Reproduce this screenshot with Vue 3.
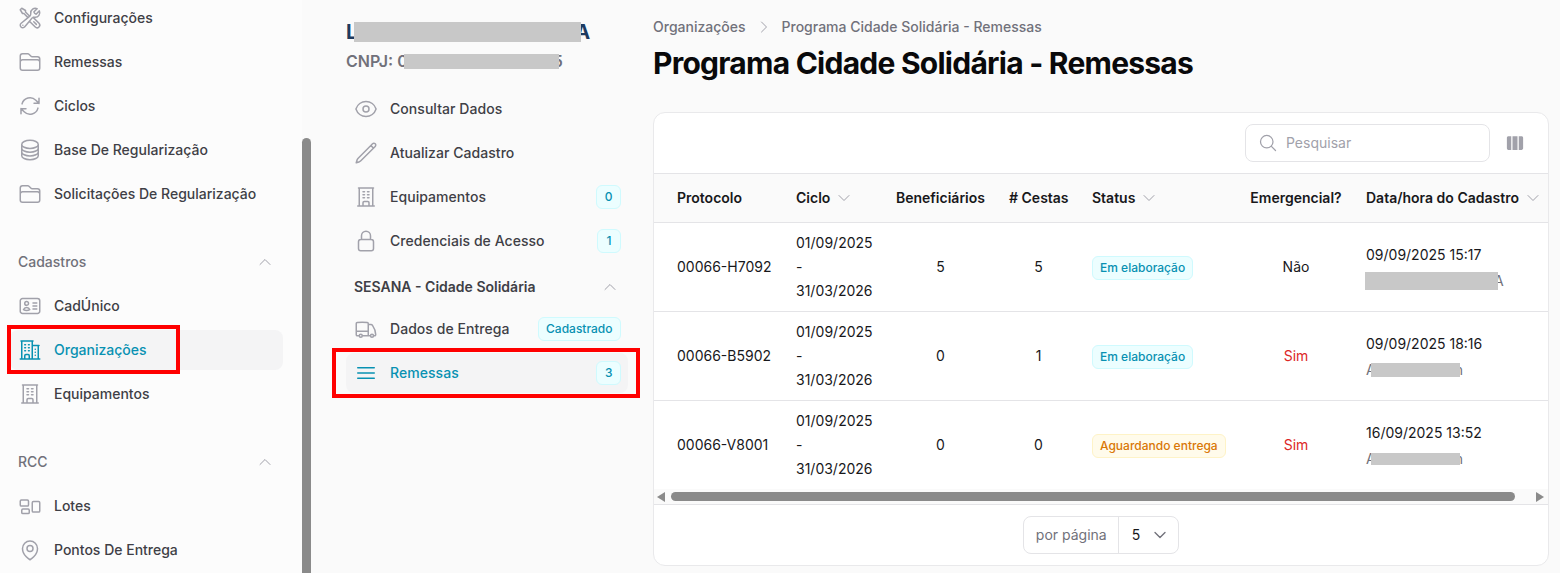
<script setup>
const P = {
  tools: 'M11.42 15.17 17.25 21A2.652 2.652 0 0 0 21 17.25l-5.877-5.877M11.42 15.17l2.496-3.03c.317-.384.74-.626 1.208-.766M11.42 15.17l-4.655 5.653a2.548 2.548 0 1 1-3.586-3.586l6.837-5.63m5.108-.233c.55-.164 1.163-.188 1.743-.14a4.5 4.5 0 0 0 4.486-6.336l-3.276 3.277a3.004 3.004 0 0 1-2.25-2.25l3.276-3.276a4.5 4.5 0 0 0-6.336 4.486c.091 1.076-.071 2.264-.904 2.95l-.102.085m-1.745 1.437L5.909 7.5H4.5L2.25 3.75l1.5-1.5L7.5 4.5v1.409l4.26 4.26m-1.745 1.437 1.745-1.437m6.615 8.206L15.75 15.75M4.867 19.125h.008v.008h-.008v-.008Z',
  folder: 'M2.25 12.75V12A2.25 2.25 0 0 1 4.5 9.75h15A2.25 2.25 0 0 1 21.75 12v.75m-8.69-6.44-2.12-2.12a1.5 1.5 0 0 0-1.061-.44H4.5A2.25 2.25 0 0 0 2.25 6v12a2.25 2.25 0 0 0 2.25 2.25h15A2.25 2.25 0 0 0 21.75 18V9a2.25 2.25 0 0 0-2.25-2.25h-5.379a1.5 1.5 0 0 1-1.06-.44Z',
  cycle: 'M16.023 9.348h4.992v-.001M2.985 19.644v-4.992m0 0h4.992m-4.993 0 3.181 3.183a8.25 8.25 0 0 0 13.803-3.7M4.031 9.865a8.25 8.25 0 0 1 13.803-3.7l3.181 3.182m0-4.991v4.99',
  stack: 'M20.25 6.375c0 2.278-3.694 4.125-8.25 4.125S3.75 8.653 3.75 6.375m16.5 0c0-2.278-3.694-4.125-8.25-4.125S3.75 4.097 3.75 6.375m16.5 0v11.25c0 2.278-3.694 4.125-8.25 4.125s-8.25-1.847-8.25-4.125V6.375m16.5 0v3.75m-16.5-3.75v3.75m16.5 0v3.75C20.25 16.153 16.556 18 12 18s-8.25-1.847-8.25-4.125v-3.75m16.5 0c0 2.278-3.694 4.125-8.25 4.125s-8.25-1.847-8.25-4.125',
  id: 'M15 9h3.75M15 12h3.75M15 15h3.75M4.5 19.5h15a2.25 2.25 0 0 0 2.25-2.25V6.75A2.25 2.25 0 0 0 19.5 4.5h-15a2.25 2.25 0 0 0-2.25 2.25v10.5A2.25 2.25 0 0 0 4.5 19.5Zm6-10.125a1.875 1.875 0 1 1-3.75 0 1.875 1.875 0 0 1 3.75 0Zm1.294 6.336a6.721 6.721 0 0 1-3.17.789 6.721 6.721 0 0 1-3.168-.789 3.376 3.376 0 0 1 6.338 0Z',
  office2: 'M2.25 21h19.5m-18-18v18m10.5-18v18m6-13.5V21M6.75 6.75h.75m-.75 3h.75m-.75 3h.75m3-6h.75m-.75 3h.75m-.75 3h.75M6.75 21v-3.375c0-.621.504-1.125 1.125-1.125h2.25c.621 0 1.125.504 1.125 1.125V21M3 3h12m-.75 4.5H21m-3.75 3.75h.008v.008h-.008v-.008Zm0 3h.008v.008h-.008v-.008Zm0 3h.008v.008h-.008v-.008Z',
  office: 'M3.75 21h16.5M4.5 3h15M5.25 3v18m13.5-18v18M9 6.75h1.5m-1.5 3h1.5m-1.5 3h1.5m3-6H15m-1.5 3H15m-1.5 3H15M9 21v-3.375c0-.621.504-1.125 1.125-1.125h3.75c.621 0 1.125.504 1.125 1.125V21',
  group: 'M2.25 7.125C2.25 6.504 2.754 6 3.375 6h6c.621 0 1.125.504 1.125 1.125v3.75c0 .621-.504 1.125-1.125 1.125h-6a1.125 1.125 0 0 1-1.125-1.125v-3.75ZM14.25 8.625c0-.621.504-1.125 1.125-1.125h5.25c.621 0 1.125.504 1.125 1.125v8.25c0 .621-.504 1.125-1.125 1.125h-5.25a1.125 1.125 0 0 1-1.125-1.125v-8.25ZM3.75 16.125c0-.621.504-1.125 1.125-1.125h5.25c.621 0 1.125.504 1.125 1.125v2.25c0 .621-.504 1.125-1.125 1.125h-5.25a1.125 1.125 0 0 1-1.125-1.125v-2.25Z',
  pin: 'M15 10.5a3 3 0 1 1-6 0 3 3 0 0 1 6 0ZM19.5 10.5c0 7.142-7.5 11.25-7.5 11.25S4.5 17.642 4.5 10.5a7.5 7.5 0 1 1 15 0Z',
  eye: 'M2.036 12.322a1.012 1.012 0 0 1 0-.639C3.423 7.51 7.36 4.5 12 4.5c4.638 0 8.573 3.007 9.963 7.178.07.207.07.431 0 .639C20.577 16.49 16.64 19.5 12 19.5c-4.638 0-8.573-3.007-9.963-7.178ZM15 12a3 3 0 1 1-6 0 3 3 0 0 1 6 0Z',
  pencil: 'm16.862 4.487 1.687-1.688a1.875 1.875 0 1 1 2.652 2.652L6.832 19.82a4.5 4.5 0 0 1-1.897 1.13l-2.685.8.8-2.685a4.5 4.5 0 0 1 1.13-1.897L16.863 4.487Zm0 0L19.5 7.125',
  lock: 'M16.5 10.5V6.75a4.5 4.5 0 1 0-9 0v3.75m-.75 11.25h10.5a2.25 2.25 0 0 0 2.25-2.25v-6.75a2.25 2.25 0 0 0-2.25-2.25H6.75a2.25 2.25 0 0 0-2.25 2.25v6.75a2.25 2.25 0 0 0 2.25 2.25Z',
  truck: 'M8.25 18.75a1.5 1.5 0 0 1-3 0m3 0a1.5 1.5 0 0 0-3 0m3 0h6m-9 0H3.375a1.125 1.125 0 0 1-1.125-1.125V14.25m17.25 4.5a1.5 1.5 0 0 1-3 0m3 0a1.5 1.5 0 0 0-3 0m3 0h1.125c.621 0 1.129-.504 1.09-1.124a17.902 17.902 0 0 0-3.213-9.193 2.056 2.056 0 0 0-1.58-.86H14.25M16.5 18.75h-2.25m0-11.177v-.958c0-.568-.422-1.048-.987-1.106a48.554 48.554 0 0 0-10.026 0 1.106 1.106 0 0 0-.987 1.106v7.635m12-6.677v6.677m0 4.5v-4.5m0 0h-12',
  bars: 'M3.75 6.75h16.5M3.75 12h16.5m-16.5 5.25h16.5',
  up: 'm4.5 15.75 7.5-7.5 7.5 7.5',
  down: 'm19.5 8.25-7.5 7.5-7.5-7.5',
  right: 'm8.25 4.5 7.5 7.5-7.5 7.5',
  search: 'm21 21-5.197-5.197m0 0A7.5 7.5 0 1 0 5.196 5.196a7.5 7.5 0 0 0 10.607 10.607Z'
}

const groups = [
  { items: [
    { i: 'tools', t: 'Configurações' }, { i: 'folder', t: 'Remessas' }, { i: 'cycle', t: 'Ciclos' },
    { i: 'stack', t: 'Base De Regularização' }, { i: 'folder', t: 'Solicitações De Regularização' }
  ] },
  { title: 'Cadastros', items: [
    { i: 'id', t: 'CadÚnico' }, { i: 'office2', t: 'Organizações', active: true }, { i: 'office', t: 'Equipamentos' }
  ] },
  { title: 'RCC', items: [
    { i: 'group', t: 'Lotes' }, { i: 'pin', t: 'Pontos De Entrega' }
  ] }
]

const sub1 = [
  { i: 'eye', t: 'Consultar Dados' }, { i: 'pencil', t: 'Atualizar Cadastro' },
  { i: 'office', t: 'Equipamentos', b: '0' }, { i: 'lock', t: 'Credenciais de Acesso', b: '1' }
]
const sub2 = [
  { i: 'truck', t: 'Dados de Entrega', b: 'Cadastrado' },
  { i: 'bars', t: 'Remessas', b: '3', active: true }
]

const heads = [
  { t: 'Protocolo' }, { t: 'Ciclo', s: 1 }, { t: 'Beneficiários', c: 1 }, { t: '# Cestas', c: 1 },
  { t: 'Status', s: 1 }, { t: 'Emergencial?', c: 1 }, { t: 'Data/hora do Cadastro', s: 1 }
]
const rows = [
  { p: '00066-H7092', b: 5, c: 5, st: 'Em elaboração', warn: false, em: 'Não', d: '09/09/2025 15:17', pre: '', w: 133, h: 18, ml: -1, mr: -4, post: 'A' },
  { p: '00066-B5902', b: 0, c: 1, st: 'Em elaboração', warn: false, em: 'Sim', d: '09/09/2025 18:16', pre: 'A', w: 89, h: 14, ml: -5, mr: -5, post: 'n' },
  { p: '00066-V8001', b: 0, c: 0, st: 'Aguardando entrega', warn: true, em: 'Sim', d: '16/09/2025 13:52', pre: 'A', w: 89, h: 12, ml: -5, mr: -5, post: 'n' }
]
const redactStyle = (r) => ({
  width: r.w + 'px',
  height: r.h + 'px',
  marginLeft: r.ml + 'px',
  marginRight: r.mr + 'px'
})
</script>

<template>
  <div class="page">
    <aside class="side">
      <section v-for="(g, gi) in groups" :key="gi" class="group">
        <div v-if="g.title" class="group-title">
          <span>{{ g.title }}</span>
          <svg class="chev" viewBox="0 0 24 24"><path :d="P.up" /></svg>
        </div>
        <a v-for="it in g.items" :key="it.t" class="row" :class="{ active: it.active }">
          <svg class="ico" viewBox="0 0 24 24"><path :d="P[it.i]" /></svg>
          <span>{{ it.t }}</span>
        </a>
      </section>
      <div class="side-track"><div class="side-thumb"></div></div>
    </aside>

    <nav class="sub">
      <h2 class="org">L<span class="redact org-r"></span>A</h2>
      <p class="cnpj">CNPJ: 0<span class="redact cnpj-r"></span>5</p>
      <a v-for="it in sub1" :key="it.t" class="srow">
        <svg class="ico" viewBox="0 0 24 24"><path :d="P[it.i]" /></svg>
        <span class="slabel">{{ it.t }}</span>
        <span v-if="it.b" class="badge">{{ it.b }}</span>
      </a>
      <div class="sub-title">
        <span>SESANA - Cidade Solidária</span>
        <svg class="chev" viewBox="0 0 24 24"><path :d="P.up" /></svg>
      </div>
      <a v-for="it in sub2" :key="it.t" class="srow" :class="{ active: it.active }">
        <svg class="ico" viewBox="0 0 24 24"><path :d="P[it.i]" /></svg>
        <span class="slabel">{{ it.t }}</span>
        <span class="badge">{{ it.b }}</span>
      </a>
    </nav>

    <main class="main">
      <div class="crumbs">
        <span>Organizações</span>
        <svg class="crumb-sep" viewBox="0 0 24 24"><path :d="P.right" /></svg>
        <span>Programa Cidade Solidária - Remessas</span>
      </div>
      <h1 class="title">Programa Cidade Solidária - Remessas</h1>

      <div class="card">
        <div class="toolbar">
          <div class="search">
            <svg class="search-ico" viewBox="0 0 24 24"><path :d="P.search" /></svg>
            <span>Pesquisar</span>
          </div>
          <svg class="cols" viewBox="0 0 24 24">
            <path d="M15 3.75H9v16.5h6V3.75ZM16.5 20.25h3.375c1.035 0 1.875-.84 1.875-1.875V5.625c0-1.036-.84-1.875-1.875-1.875H16.5v16.5ZM4.125 3.75H7.5v16.5H4.125a1.875 1.875 0 0 1-1.875-1.875V5.625c0-1.036.84-1.875 1.875-1.875Z" />
          </svg>
        </div>

        <table class="table">
          <colgroup>
            <col class="c1" /><col class="c2" /><col class="c3" /><col class="c4" />
            <col class="c5" /><col class="c6" /><col class="c7" />
          </colgroup>
          <thead>
            <tr>
              <th v-for="h in heads" :key="h.t" :class="{ center: h.c }">
                <span class="th">{{ h.t }}
                  <svg v-if="h.s" class="sort" viewBox="0 0 24 24"><path :d="P.down" /></svg>
                </span>
              </th>
            </tr>
          </thead>
          <tbody>
            <tr v-for="r in rows" :key="r.p">
              <td>{{ r.p }}</td>
              <td>01/09/2025<br />-<br />31/03/2026</td>
              <td class="center">{{ r.b }}</td>
              <td class="center">{{ r.c }}</td>
              <td><span class="badge pill" :class="{ warn: r.warn }">{{ r.st }}</span></td>
              <td class="center" :class="{ yes: r.em === 'Sim' }">{{ r.em }}</td>
              <td class="dt">
                <div>{{ r.d }}</div>
                <div class="who">{{ r.pre }}<span class="redact" :style="redactStyle(r)"></span>{{ r.post }}</div>
              </td>
            </tr>
          </tbody>
        </table>

        <div class="hbar">
          <i class="arrow left"></i>
          <div class="hthumb"></div>
          <i class="arrow rgt"></i>
        </div>

        <div class="pager">
          <div class="per">
            <span class="per-label">por página</span>
            <span class="per-val">5
              <svg class="per-ico" viewBox="0 0 24 24"><path :d="P.down" /></svg>
            </span>
          </div>
        </div>
      </div>
    </main>

    <div class="mark mark-a"></div>
    <div class="mark mark-b"></div>
  </div>
</template>

<style>
html, body { margin: 0; background: #fafafa; }
</style>

<style scoped>
.page {
  position: relative; display: flex; width: 1560px; height: 573px; overflow: hidden;
  background: #fafafa; color: #18181b;
  font-family: Inter, "Liberation Sans", sans-serif; font-size: 14px; line-height: 20px;
}
svg { display: block; flex: none; fill: none; stroke: currentColor; stroke-width: 1.5; stroke-linecap: round; stroke-linejoin: round; }
.ico { width: 24px; height: 24px; color: #a1a1aa; }
.chev { width: 16px; height: 16px; color: #a1a1aa; }

/* main sidebar */
.side { position: relative; flex: none; width: 312px; height: 573px; box-sizing: border-box; padding: 0 29px 0 10px; background: #fcfcfc; }
.group { display: flex; flex-direction: column; gap: 4px; margin-bottom: 28px; }
.group:first-child { margin-top: -2px; }
.group-title { display: flex; align-items: center; justify-content: space-between; height: 40px; padding: 0 10px 0 8px; color: #71717a; font-weight: 500; }
.row { display: flex; align-items: center; gap: 12px; height: 40px; padding: 0 8px; border-radius: 8px; color: #3f3f46; font-weight: 500; }
.row.active { background: #f4f4f5; color: #0891b2; }
.row.active .ico { color: #0891b2; }
.side-track { position: absolute; top: 0; right: 0; bottom: 0; width: 10px; background: #fafafa; }
.side-thumb { position: absolute; top: 138px; bottom: 0; left: 0; right: 1px; background: #8a8a8a; border-radius: 5px 5px 0 0; }

/* secondary navigation */
.sub { flex: none; width: 341px; box-sizing: border-box; padding: 18px 25px 0 34px; display: flex; flex-direction: column; }
.org { margin: 0; height: 28px; font-size: 20px; line-height: 28px; font-weight: 700; color: #1e3a5f; white-space: nowrap; }
.org-r { width: 227px; height: 20px; margin: 0 -6px 0 -3px; vertical-align: -3px; }
.cnpj { margin: 1px 0 14px; height: 28px; font-size: 16px; line-height: 28px; font-weight: 600; color: #71717a; white-space: nowrap; }
.cnpj-r { width: 155px; height: 15px; margin: 0 -6px 0 -4px; vertical-align: -2px; }
.redact { display: inline-block; position: relative; background: #c8c8c8; }
.srow { display: flex; align-items: center; gap: 12px; height: 40px; margin-bottom: 4px; padding: 0 7px 0 8px; border-radius: 8px; color: #3f3f46; font-weight: 500; letter-spacing: 0.05px; }
.slabel { flex: 1; }
.srow.active { background: #f4f4f5; color: #0891b2; }
.srow.active .ico { color: #0891b2; }
.sub-title { display: flex; align-items: center; justify-content: space-between; height: 22px; margin: 11px 0 11px; padding: 0 10px 0 8px; font-weight: 600; color: #3f3f46; }
.badge { display: inline-flex; align-items: center; justify-content: center; box-sizing: border-box; min-width: 24px; height: 24px; padding: 0 7.5px; font-size: 12px; line-height: 16px; font-weight: 500; letter-spacing: 0; color: #0891b2; background: #ecfeff; border: 1px solid #cffafe; border-radius: 6px; white-space: nowrap; }
.pill { padding: 0 7px; }
.pill.warn { color: #d97706; background: #fffbeb; border-color: #fef3c7; }

/* content */
.main { flex: 1; min-width: 0; box-sizing: border-box; padding: 17px 11px 0 0; }
.crumbs { display: flex; align-items: center; gap: 10px; color: #71717a; height: 20px; font-weight: 500; }
.crumb-sep { width: 16px; height: 16px; color: #a1a1aa; }
.title { margin: 8px 0 31px; font-size: 30px; line-height: 36px; font-weight: 700; color: #09090b; letter-spacing: -0.75px; white-space: nowrap; }

.card { display: flex; flex-direction: column; height: 454px; box-sizing: border-box; background: #fff; border: 1px solid #e9e9eb; border-radius: 12px; overflow: hidden; }
.toolbar { flex: none; display: flex; align-items: center; justify-content: flex-end; gap: 15px; height: 61px; box-sizing: border-box; padding: 0 23px 1px 0; border-bottom: 1px solid #e4e4e7; }
.search { display: flex; align-items: center; gap: 8px; width: 245px; height: 38px; box-sizing: border-box; padding: 0 12px; border: 1px solid #e4e4e7; border-radius: 8px; color: #a1a1aa; }
.search-ico { width: 20px; height: 20px; }
.cols { width: 20px; height: 20px; fill: #a1a1aa; stroke: none; }

.table { flex: none; width: 894px; table-layout: fixed; border-collapse: separate; border-spacing: 0; }
.c1 { width: 130px; }
.c2 { width: 100px; }
.c3 { width: 113px; }
.c4 { width: 83px; }
.c5 { width: 158px; }
.c6 { width: 116px; }
.c7 { width: 194px; }
th { height: 49px; box-sizing: border-box; padding: 0 12px; background: #fafafa; border-bottom: 1px solid #e4e4e7; text-align: left; font-weight: 600; color: #18181b; white-space: nowrap; }
.th { display: inline-flex; align-items: center; gap: 6px; }
.sort { width: 16px; height: 16px; color: #a1a1aa; }
td { height: 89px; box-sizing: border-box; padding: 8px 12px; line-height: 24px; border-bottom: 1px solid #e4e4e7; color: #18181b; vertical-align: middle; white-space: nowrap; }
th:first-child, td:first-child { padding-left: 23px; }
tbody tr:last-child td { border-bottom: 0; height: 88px; }
.center { text-align: center; }
td.yes { color: #dc2626; }
td.dt { padding-top: 10px; }
.who { margin-top: 2px; color: #71717a; height: 24px; display: flex; align-items: center; }

.hbar { flex: none; display: flex; align-items: center; height: 15px; box-sizing: border-box; padding: 0 4px 0 3px; background: #fafafa; }
.hthumb { width: 844px; height: 9px; margin: 0 auto 0 6px; background: #8a8a8a; border-radius: 5px; }
.arrow { width: 0; height: 0; border-top: 5px solid transparent; border-bottom: 5px solid transparent; }
.arrow.left { border-right: 8px solid #8a8a8a; }
.arrow.rgt { border-left: 8px solid #8a8a8a; }

.pager { flex: 1; display: flex; align-items: center; justify-content: center; border-top: 1px solid #e4e4e7; }
.per { display: flex; align-items: stretch; height: 38px; box-sizing: border-box; border: 1px solid #e4e4e7; border-radius: 8px; }
.per-label { display: flex; align-items: center; padding: 0 11px 0 12px; color: #71717a; border-right: 1px solid #e4e4e7; }
.per-val { display: flex; align-items: center; gap: 12px; padding: 0 10px 0 13px; color: #18181b; }
.per-ico { width: 16px; height: 16px; color: #71717a; stroke-width: 2; }

/* annotations drawn on top of the screenshot */
.mark { position: absolute; box-sizing: border-box; border: 4px solid #ff0000; pointer-events: none; }
.mark-a { left: 7px; top: 325px; width: 173px; height: 49px; }
.mark-b { left: 332px; top: 348px; width: 308px; height: 50px; }
</style>
